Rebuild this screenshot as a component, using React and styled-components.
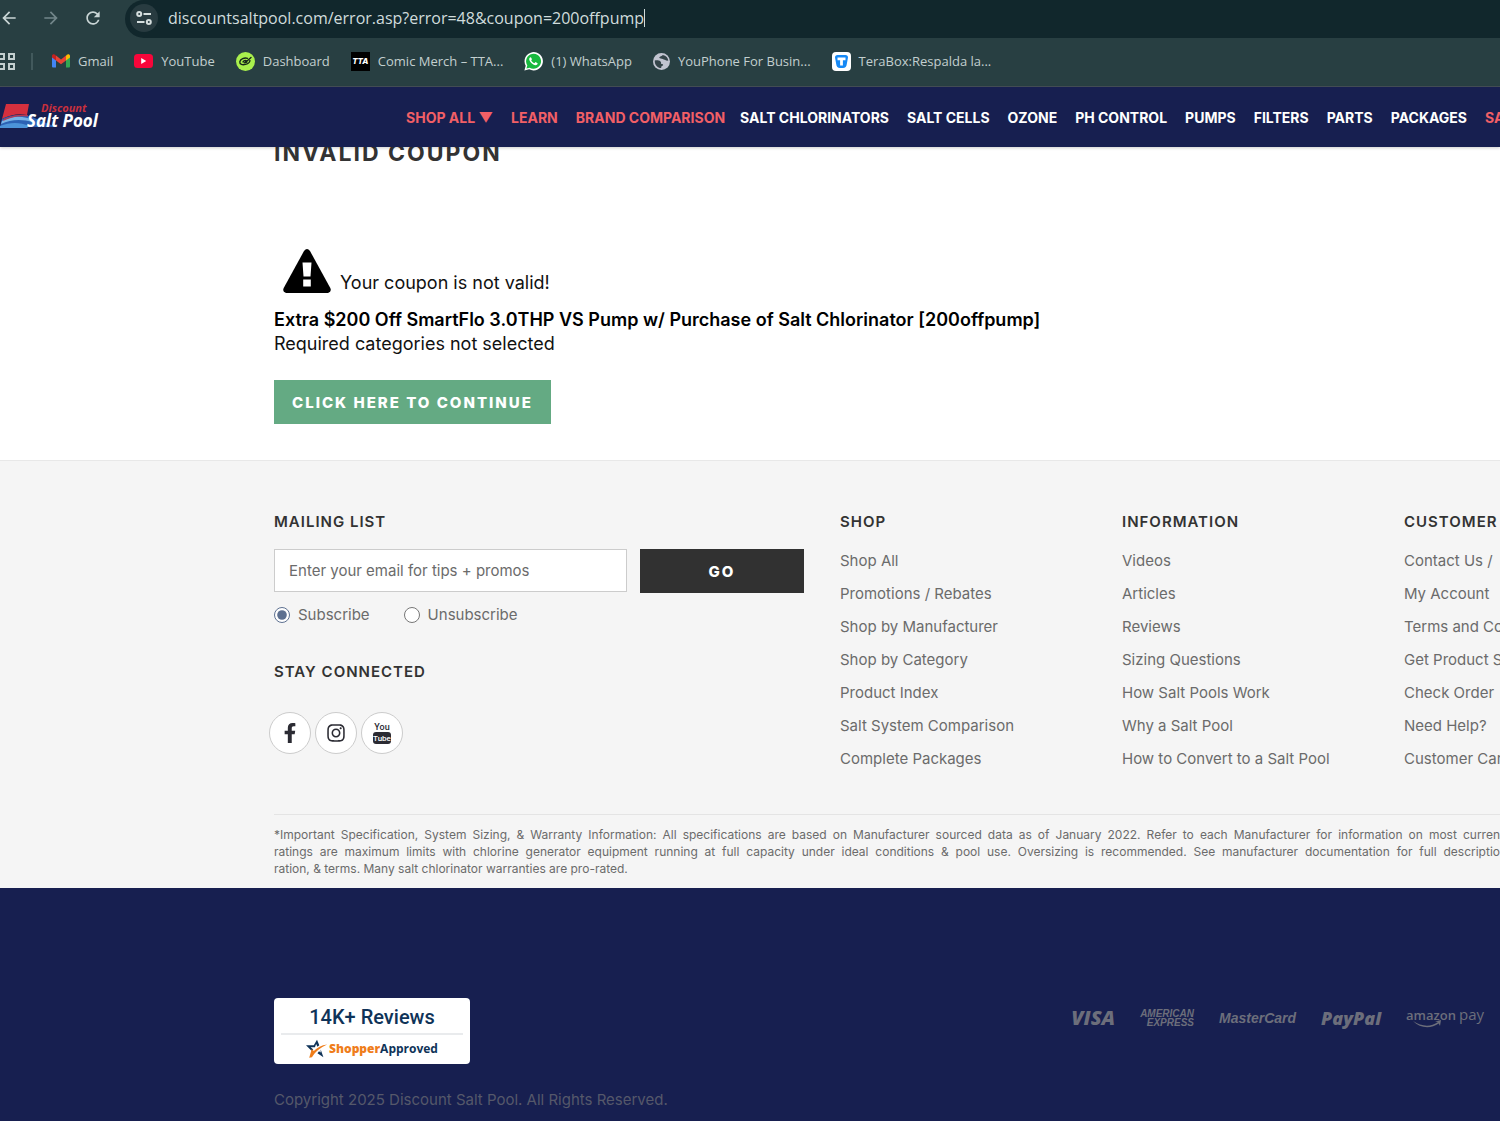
import React from 'react';
import styled, { createGlobalStyle } from 'styled-components';
import { MdArrowBack, MdArrowForward, MdRefresh } from 'react-icons/md';
import { FaFacebookF, FaInstagram } from 'react-icons/fa';

const GlobalStyle = createGlobalStyle`
  * {
    box-sizing: border-box;
  }

  body {
    margin: 0;
    background: #fff;
    color: #111;
    font-family: Inter, 'Liberation Sans', sans-serif;
    font-size: 16px;
    overflow-x: hidden;
  }

  h1, h2, p, ul {
    margin: 0;
    padding: 0;
  }

  ul {
    list-style: none;
  }

  a {
    color: inherit;
    text-decoration: none;
  }
`;

const Page = styled.div`
  min-height: 100vh;
  overflow: hidden;
  display: flex;
  flex-direction: column;
`;

/* Browser chrome */

const Browser = styled.div`
  background: #283f42;
  color: #c3cfcf;
  font-family: 'Open Sans', 'Noto Sans', sans-serif;
  border-bottom: 1px solid #454f56;
`;

const Toolbar = styled.div`
  display: flex;
  align-items: center;
  height: 38px;
`;

const ToolButton = styled.button`
  display: flex;
  align-items: center;
  justify-content: center;
  width: 42px;
  height: 36px;
  padding: 0;
  border: 0;
  background: none;
  color: ${props => props.$dim ? '#72868a' : '#c9d5d5'};
  font-size: 20px;
`;

const ToolButtons = styled.div`
  display: flex;
  height: 38px;
  margin-left: -12px;
  width: 137px;
  flex-shrink: 0;
`;

const AddressBar = styled.div`
  flex: 1;
  display: flex;
  align-items: center;
  height: 38px;
  padding: 0 0 2px 5px;
  background: #11272c;
  border-radius: 19px 0 0 19px;
`;

const SiteInfo = styled.button`
  display: flex;
  align-items: center;
  justify-content: center;
  width: 28px;
  height: 28px;
  margin-right: 10px;
  padding: 0;
  border: 0;
  border-radius: 50%;
  background: #283b40;
  color: #d5dede;
`;

const UrlInput = styled.input`
  field-sizing: content;
  padding: 0;
  border: 0;
  outline: 0;
  background: none;
  color: #d0dcdc;
  font-family: inherit;
  font-size: 16px;
`;

const Caret = styled.span`
  width: 1px;
  height: 18px;
  background: #d0dcdc;
`;

const Bookmarks = styled.nav`
  display: flex;
  align-items: center;
  gap: 21px;
  height: 48px;
  padding-bottom: 2px;
  font-size: 13px;
`;

const AppsButton = styled.button`
  display: flex;
  width: 35px;
  margin: 0 -2px 0 -2px;
  padding: 0;
  border: 0;
  border-right: 2px solid #42595c;
  background: none;
  color: #c3cfcf;
`;

const Bookmark = styled.a`
  display: flex;
  align-items: center;
  gap: 8px;
  white-space: nowrap;
`;

const TtaIcon = styled.span`
  display: flex;
  align-items: center;
  justify-content: center;
  width: 19px;
  height: 19px;
  background: #000;
  color: #fff;
  font: italic 800 8px Inter, sans-serif;
`;

/* Store header */

const Header = styled.header`
  position: relative;
  z-index: 1;
  display: flex;
  align-items: center;
  height: 60px;
  background: #171f50;
  box-shadow: 0 1px 3px rgba(0, 0, 0, 0.2);
`;

const LogoLink = styled.a`
  display: flex;
  width: 406px;
  flex-shrink: 0;
`;

const NavGroup = styled.ul`
  display: flex;
  gap: 18px;
  margin-right: ${props => props.$wide ? '18px' : '15px'};
  color: ${props => props.$accent ? '#f25f66' : '#fff'};
  font-size: 14px;
  font-weight: 700;
  white-space: nowrap;
`;

/* Coupon message */

const Main = styled.main`
  height: 313px;
  padding-left: 274px;
`;

const Title = styled.h1`
  height: 111px;
  margin-top: -9px;
  color: #333;
  font-size: 23px;
  line-height: 30px;
  font-weight: 700;
  letter-spacing: 2px;
`;

const Alert = styled.p`
  display: flex;
  align-items: flex-end;
  gap: 9px;
  padding-left: 9px;
  margin-bottom: 15px;
  font-size: 18px;
  line-height: 20px;
`;

const CouponName = styled.p`
  color: #000;
  font-size: 18px;
  line-height: 24px;
  font-weight: 600;
`;

const CouponReason = styled.p`
  margin-bottom: 24px;
  font-size: 18px;
  line-height: 24px;
`;

const SolidButton = styled.button`
  height: 44px;
  padding: 0 18px;
  border: 0;
  background: ${props => props.$dark ? '#313131' : '#64aa83'};
  color: #fff;
  font-family: inherit;
  font-size: 15px;
  font-weight: 800;
  letter-spacing: 2px;
`;

/* Footer */

const Footer = styled.footer`
  padding: 48px 0 11px 274px;
  border-top: 1px solid #e8e8e8;
  background: #f5f5f5;
  color: #6b6b6b;
  font-size: 15px;
`;

const FooterColumns = styled.div`
  display: grid;
  grid-template-columns: 530px repeat(3, 246px);
  column-gap: 36px;
  height: 305px;
`;

const FooterTitle = styled.h2`
  margin-bottom: 15px;
  color: #333;
  font-size: 15px;
  line-height: 25px;
  font-weight: 600;
  letter-spacing: 1px;
`;

const LinkItem = styled.li`
  height: 33px;
  line-height: 24px;
  white-space: nowrap;
`;

const SignupRow = styled.div`
  display: grid;
  grid-template-columns: 353px 164px;
  gap: 13px;
`;

const EmailInput = styled.input`
  height: 43px;
  padding: 0 14px;
  border: 1px solid #ccc;
  background: #fff;
  font-family: inherit;
  font-size: 15px;

  &::placeholder {
    color: #6b6b6b;
  }
`;

const RadioRow = styled.div`
  display: flex;
  gap: 34px;
  margin: 10px 0 32px;
`;

const RadioLabel = styled.label`
  display: flex;
  align-items: center;
  gap: 8px;
  line-height: 24px;

  input {
    width: 16px;
    height: 16px;
    margin: 0;
    accent-color: #5d7090;
  }
`;

const SocialRow = styled.div`
  display: flex;
  gap: 4px;
  margin: 28px 0 0 -5px;
`;

const SocialLink = styled.a`
  display: flex;
  align-items: center;
  justify-content: center;
  width: 42px;
  height: 42px;
  border: 1px solid #ccc;
  border-radius: 50%;
  background: #fff;
  color: #2b2b33;
  font-size: 20px;
`;

const Disclaimer = styled.div`
  padding-top: 11px;
  border-top: 1px solid #e4e4e4;
  font-size: 12px;
  line-height: 17px;
`;

const DisclaimerLine = styled.p`
  text-align-last: ${props => props.$last ? 'left' : 'justify'};
  white-space: ${props => props.$last ? 'normal' : 'nowrap'};
`;

const BottomBar = styled.div`
  flex: 1;
  padding: 110px 15px 8px 274px;
  background: #171f50;
`;

const BottomRow = styled.div`
  display: flex;
  align-items: flex-start;
  justify-content: space-between;
`;

const ReviewBadge = styled.a`
  display: block;
  width: 196px;
  height: 66px;
  padding: 3px 7px;
  border-radius: 4px;
  background: #fff;
  color: #0f3358;
  text-align: center;
`;

const ReviewCount = styled.div`
  border-bottom: 2px solid #e9ebed;
  font-family: Roboto, sans-serif;
  font-size: 20px;
  line-height: 32px;
  font-weight: 500;
`;

const ReviewBrand = styled.div`
  display: flex;
  align-items: center;
  justify-content: center;
  gap: 1px;
  font-family: 'Open Sans', sans-serif;
  font-size: 12px;
  line-height: 28px;
  font-weight: 700;

  b {
    color: #ef7d1a;
  }
`;

const Payments = styled.div`
  display: flex;
  align-items: center;
  gap: 25px;
  height: 40px;
  color: #6c6e7b;
  font-family: 'Open Sans', sans-serif;
`;

const PayMark = styled.span`
  font-family: ${props => props.$sans ? "'Liberation Sans', sans-serif" : 'inherit'};
  font-size: ${props => props.$size}px;
  font-style: italic;
  font-weight: 800;
  line-height: 20px;
`;

const Amex = styled.span`
  display: flex;
  flex-direction: column;
  font: italic 700 10px/9px 'Liberation Sans', sans-serif;

  span + span {
    align-self: flex-end;
  }
`;

const Copyright = styled.p`
  margin-top: 24px;
  color: #55586a;
  font-size: 15px;
  line-height: 24px;
`;

const accentNav = ['SHOP ALL ▼', 'LEARN', 'BRAND COMPARISON'];

const mainNav = [
  'SALT CHLORINATORS', 'SALT CELLS', 'OZONE', 'PH CONTROL',
  'PUMPS', 'FILTERS', 'PARTS', 'PACKAGES',
];

const columns = [
  {
    title: 'SHOP',
    links: [
      'Shop All', 'Promotions / Rebates', 'Shop by Manufacturer', 'Shop by Category',
      'Product Index', 'Salt System Comparison', 'Complete Packages',
    ],
  },
  {
    title: 'INFORMATION',
    links: [
      'Videos', 'Articles', 'Reviews', 'Sizing Questions',
      'How Salt Pools Work', 'Why a Salt Pool', 'How to Convert to a Salt Pool',
    ],
  },
  {
    title: 'CUSTOMER',
    links: [
      'Contact Us /', 'My Account', 'Terms and Conditions', 'Get Product Support',
      'Check Order', 'Need Help?', 'Customer Care',
    ],
  },
];

const TuneIcon = () => (
  <svg width="16" height="16" viewBox="0 0 16 16" fill="none" stroke="currentColor" strokeWidth="2">
    <circle cx="3.2" cy="4" r="2" />
    <path d="M7.500 4H15M1 12h7.500" />
    <circle cx="12.800" cy="12" r="2" />
  </svg>
);

const AppsIcon = () => (
  <svg width="17" height="17" viewBox="0 0 17 17" fill="none" stroke="currentColor" strokeWidth="2">
    <path d="M1 1h5v5H1zM11 1h5v5h-5zM1 11h5v5H1zM11 11h5v5h-5z" />
  </svg>
);

const GmailIcon = () => (
  <svg width="18" height="14" viewBox="0 0 18 14">
    <path fill="#4285f4" d="M0 2v10.500q0 1 1 1h3V5.500z" />
    <path fill="#34a853" d="M18 2v10.500q0 1-1 1h-3V5.500z" />
    <path fill="#fbbc04" d="M14 1.800v4.700l4-3V2c0-1.800-2-2.400-3.200-1.200z" />
    <path fill="#c5221f" d="M4 1.800v4.700l-4-3V2C0 .2 2-.4 3.200.8z" />
    <path fill="#ea4335" d="M4 1.500l5 4 5-4v5l-5 3.800-5-3.800z" />
  </svg>
);

const YoutubeIcon = () => (
  <svg width="19" height="14" viewBox="0 0 19 14">
    <rect width="19" height="14" rx="3.500" fill="#f8063a" />
    <path d="M7.200 4v6l5-3z" fill="#fff" />
  </svg>
);

const DashboardIcon = () => (
  <svg width="19" height="19" viewBox="0 0 19 19" fill="none">
    <circle cx="9.500" cy="9.500" r="9.500" fill="#a9f04d" />
    <g stroke="#16261a" strokeWidth="1.400" strokeLinecap="round" strokeLinejoin="round">
      <path d="M11.500 6.300c-3-1-7.300.6-7.700 3.600-.3 2.600 2.700 3.300 5.700 2.500 2.600-.7 4.500-2.200 4.400-4" />
      <path d="M7 9.900c.8-1.300 1.800-1.700 3.200-1.300l-.6 1.600 5.400-4.700M8.300 10.900l2.600-.9" />
    </g>
  </svg>
);

const WhatsappIcon = () => (
  <svg width="19" height="19" viewBox="0 0 19 19">
    <path d="M.4 18.600l1.300-4.800A9.200 9.200 0 1 1 5.200 17.300z" fill="#fff" />
    <path d="M2.400 16.600l.9-3.200a7.500 7.500 0 1 1 2.400 2.300z" fill="#19b93f" />
    <path d="M6.900 5.200c-.5-.3-1.700.4-1.700 1.900 0 2.700 3.700 6.200 6.300 6.100 1.400-.1 2.300-1.100 2.100-2l-2.100-1.100-1.100 1.100c-1.500-.5-2.600-1.600-3.200-2.900l.8-1z" fill="#fff" />
  </svg>
);

const GlobeIcon = () => (
  <svg width="17" height="17" viewBox="0 0 17 17">
    <circle cx="8.500" cy="8.500" r="8.500" fill="#c1c4d0" />
    <path d="M9.800 1.900c-.8 1.500-2.800 1-3.600 2.600.6 1.600 2.400.8 3.600 1.600 1.200 1 2.600.4 3.200 1.500l2.300.2c-.2-3-2.200-5.300-5.500-5.900z" fill="#344449" />
    <path d="M1.800 7.500c1.800-.3 4.300-.2 5.700.9 1.200 1-.2 2.500 1.500 2.600 1.500.2 1.600 1.500 0 2-.7.300-.8 1-.8 2.100-3.800-.1-6.800-3.400-6.400-7.600z" fill="#344449" />
  </svg>
);

const TeraboxIcon = () => (
  <svg width="19" height="19" viewBox="0 0 19 19">
    <rect width="19" height="19" rx="4" fill="#fff" />
    <path d="M3 5.500Q3 3 5.500 3h8Q16 3 16 5.500L14.800 12q-.4 3.800-3.800 4H8q-3.400-.2-3.800-4z" fill="#1689f5" />
    <path d="M5.500 5.500h8v2.800h-2.600v5.200H8.100V8.300H5.500z" fill="#fff" />
  </svg>
);

const bookmarks = [
  { label: 'Gmail', icon: <GmailIcon /> },
  { label: 'YouTube', icon: <YoutubeIcon /> },
  { label: 'Dashboard', icon: <DashboardIcon /> },
  { label: 'Comic Merch – TTA...', icon: <TtaIcon>TTA</TtaIcon> },
  { label: '(1) WhatsApp', icon: <WhatsappIcon /> },
  { label: 'YouPhone For Busin...', icon: <GlobeIcon /> },
  { label: 'TeraBox:Respalda la...', icon: <TeraboxIcon /> },
];

const StoreLogo = () => (
  <svg width="104" height="36" viewBox="0 -3 104 36">
    <path d="M6 2h23l-2 11c-8-2-17 0-25 4z" fill="#d5303e" />
    <path d="M2 17c10-5 20-5 30-2l24 10H0z" fill="#2c62b4" />
    <path d="M2 19c10-6 22-5 32-1l-1 2c-11-3-22-3-32 2z" fill="#79b4e6" />
    <path d="M0 24c10-4 20-4 29 0l-2 2H0z" fill="#4c93d8" />
    <path d="M4 17c9-4 15-5 24-4l-.4 1.400C18 13.500 11 15 3 19z" fill="#b63a52" />
    <text x="41" y="10" fill="#c9303d" fontFamily="Open Sans" fontSize="11" fontStyle="italic" fontWeight="700">Discount</text>
    <text x="27" y="25" fill="#fff" fontFamily="Open Sans" fontSize="17" fontStyle="italic" fontWeight="700">Salt Pool</text>
  </svg>
);

const WarningIcon = () => (
  <svg width="48" height="44" viewBox="0 0 48 44">
    <path d="M21 2q3-4 6 0l20.300 37q1.700 4-2.300 5H3q-4-1-2.300-5z" fill="#000" />
    <path d="M19.500 13.500h9l-1 14h-7zM20.200 30.500h7.600v7h-7.600z" fill="#fff" />
  </svg>
);

const YouTubeStack = () => (
  <svg width="20" height="24" viewBox="0 0 20 24" fontFamily="Roboto" textAnchor="middle">
    <text x="10" y="9" fontSize="9" fontWeight="500" fill="#2b2b33">You</text>
    <rect x="1" y="11" width="18" height="12" rx="3" fill="#2b2b33" />
    <text x="10" y="20" fontSize="8" fontWeight="500" fill="#fff">Tube</text>
  </svg>
);

const StarIcon = () => (
  <svg width="22" height="20" viewBox="0 0 24 20">
    <path d="M0 6h8.500L12 0l2.500 6-2 1.500L11 4.500 9.800 8H5l3 2.500-2 1.500z" fill="#0f3358" />
    <path d="M16 10.500l3 8.500-6.500-4.500 1.700-2 1.800 1.400z" fill="#0f3358" />
    <path d="M3.500 19.500l2.800-9.500 2.200 2.300C12 8.500 17 5.800 23 5 16 8 9.500 13.500 6.500 19z" fill="#ef7d1a" />
  </svg>
);

const AmazonPay = () => (
  <svg width="79" height="24" viewBox="0 0 79 24" fill="currentColor" fontFamily="Open Sans">
    <text x="0" y="14" fontSize="13" fontWeight="600">amazon</text>
    <text x="53" y="14" fontSize="15">pay</text>
    <path d="M7 15c9 6 18 6 25 1l-3-.5 6-1.500-1 6-1.300-2.500C25 23 14 22.500 7 15z" />
  </svg>
);

function BrowserChrome() {
  return (
    <Browser>
      <Toolbar>
        <ToolButtons>
          <ToolButton aria-label="Back"><MdArrowBack /></ToolButton>
          <ToolButton aria-label="Forward" $dim><MdArrowForward /></ToolButton>
          <ToolButton aria-label="Reload"><MdRefresh /></ToolButton>
        </ToolButtons>
        <AddressBar>
          <SiteInfo aria-label="Site information"><TuneIcon /></SiteInfo>
          <UrlInput
            aria-label="Address"
            defaultValue="discountsaltpool.com/error.asp?error=48&coupon=200offpump"
            spellCheck={false}
          />
          <Caret />
        </AddressBar>
      </Toolbar>
      <Bookmarks>
        <AppsButton aria-label="Apps"><AppsIcon /></AppsButton>
        {bookmarks.map(item => (
          <Bookmark href="#" key={item.label}>
            {item.icon}
            {item.label}
          </Bookmark>
        ))}
      </Bookmarks>
    </Browser>
  );
}

function StoreHeader() {
  return (
    <Header>
      <LogoLink href="#" aria-label="Discount Salt Pool"><StoreLogo /></LogoLink>
      <NavGroup $accent>
        {accentNav.map(label => <li key={label}><a href="#">{label}</a></li>)}
      </NavGroup>
      <NavGroup $wide>
        {mainNav.map(label => <li key={label}><a href="#">{label}</a></li>)}
      </NavGroup>
      <NavGroup $accent>
        <li><a href="#">SALE</a></li>
      </NavGroup>
    </Header>
  );
}

function MailingList() {
  return (
    <div>
      <FooterTitle>MAILING LIST</FooterTitle>
      <SignupRow>
        <EmailInput type="email" aria-label="Email" placeholder="Enter your email for tips + promos" />
        <SolidButton $dark>GO</SolidButton>
      </SignupRow>
      <RadioRow>
        <RadioLabel>
          <input type="radio" name="list" defaultChecked />
          Subscribe
        </RadioLabel>
        <RadioLabel>
          <input type="radio" name="list" />
          Unsubscribe
        </RadioLabel>
      </RadioRow>
      <FooterTitle>STAY CONNECTED</FooterTitle>
      <SocialRow>
        <SocialLink href="#" aria-label="Facebook"><FaFacebookF /></SocialLink>
        <SocialLink href="#" aria-label="Instagram"><FaInstagram /></SocialLink>
        <SocialLink href="#" aria-label="YouTube"><YouTubeStack /></SocialLink>
      </SocialRow>
    </div>
  );
}

function App() {
  return (
    <Page>
      <GlobalStyle />
      <BrowserChrome />
      <StoreHeader />

      <Main>
        <Title>INVALID COUPON</Title>
        <Alert>
          <WarningIcon />
          Your coupon is not valid!
        </Alert>
        <CouponName>
          Extra $200 Off SmartFlo 3.0THP VS Pump w/ Purchase of Salt Chlorinator [200offpump]
        </CouponName>
        <CouponReason>Required categories not selected</CouponReason>
        <SolidButton>CLICK HERE TO CONTINUE</SolidButton>
      </Main>

      <Footer>
        <FooterColumns>
          <MailingList />
          {columns.map(column => (
            <div key={column.title}>
              <FooterTitle>{column.title}</FooterTitle>
              <ul>
                {column.links.map(link => (
                  <LinkItem key={link}><a href="#">{link}</a></LinkItem>
                ))}
              </ul>
            </div>
          ))}
        </FooterColumns>
        <Disclaimer>
          <DisclaimerLine>
            *Important Specification, System Sizing, &amp; Warranty Information: All specifications are based on Manufacturer sourced data as of January 2022. Refer to each Manufacturer for information on most curren
          </DisclaimerLine>
          <DisclaimerLine>
            ratings are maximum limits with chlorine generator equipment running at full capacity under ideal conditions &amp; pool use. Oversizing is recommended. See manufacturer documentation for full descriptio
          </DisclaimerLine>
          <DisclaimerLine $last>
            ration, &amp; terms. Many salt chlorinator warranties are pro-rated.
          </DisclaimerLine>
        </Disclaimer>
      </Footer>

      <BottomBar>
        <BottomRow>
          <ReviewBadge href="#">
            <ReviewCount>14K+ Reviews</ReviewCount>
            <ReviewBrand>
              <StarIcon />
              <span><b>Shopper</b>Approved</span>
            </ReviewBrand>
          </ReviewBadge>
          <Payments>
            <PayMark $size={20}>VISA</PayMark>
            <Amex>
              <span>AMERICAN</span>
              <span>EXPRESS</span>
            </Amex>
            <PayMark $size={14} $sans>MasterCard</PayMark>
            <PayMark $size={18}>PayPal</PayMark>
            <AmazonPay />
          </Payments>
        </BottomRow>
        <Copyright>Copyright 2025 Discount Salt Pool. All Rights Reserved.</Copyright>
      </BottomBar>
    </Page>
  );
}

export default App;
